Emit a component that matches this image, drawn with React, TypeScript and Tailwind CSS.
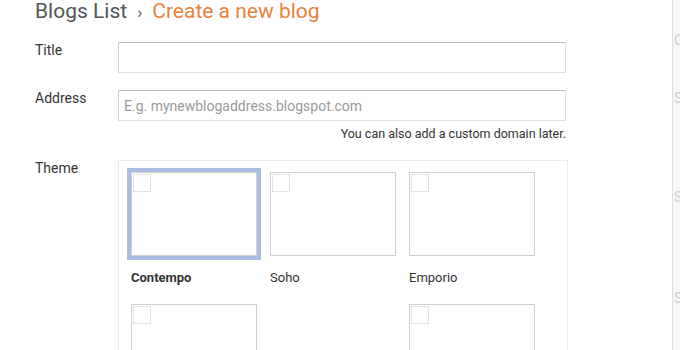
const themes = [
  { name: 'Contempo', selected: true },
  { name: 'Soho', selected: false },
  { name: 'Emporio', selected: false },
];

function ThemeTile({ name, selected, hidden }: { name?: string; selected?: boolean; hidden?: boolean }) {
  return (
    <div className="flex flex-col">
      <div className={`w-[134px] h-[92px] border-4 ${selected ? 'border-[#a9bde2]' : 'border-transparent'}`}>
        {!hidden && (
          <div className="relative w-[126px] h-[84px] border border-[#cfcfcf] bg-white">
            <div className="absolute left-px top-px w-[18px] h-[18px] border border-[#e3e3e3]" />
          </div>
        )}
      </div>
      {name && (
        <div className={`mt-[10px] pl-[4px] text-[13px] leading-[16px] text-[#333] ${selected ? 'font-bold' : ''}`}>
          {name}
        </div>
      )}
    </div>
  );
}

export default function App() {
  return (
    <div className="flex w-[680px] h-[350px] overflow-hidden bg-white font-['Roboto',sans-serif]">
      <div className="w-[672px] shrink-0 pl-[35px]">
        <h1 className="flex items-baseline text-[21px] leading-[22px] text-[#555]">
          <span>Blogs List</span>
          <span className="mx-[10px] text-[17px]">›</span>
          <span className="text-[#e9823b]">Create a new blog</span>
        </h1>

        <div className="mt-[19px] flex">
          <label className="w-[83px] text-[14px] leading-[16px] text-[#333]">Title</label>
          <input
            className="w-[448px] h-[31px] border border-[#e0e0e0] border-t-[#bdbdbd] border-l-[#cfcfcf] px-[5px] text-[14px] outline-none"
          />
        </div>

        <div className="mt-[17px] flex">
          <label className="w-[83px] text-[14px] leading-[16px] text-[#333]">Address</label>
          <div className="flex flex-col items-end">
            <input
              placeholder="E.g. mynewblogaddress.blogspot.com"
              className="w-[448px] h-[31px] border border-[#e0e0e0] border-t-[#bdbdbd] border-l-[#cfcfcf] px-[5px] text-[14px] text-[#333] placeholder:text-[#9a9a9a] outline-none"
            />
            <div className="mt-[5px] text-[12.5px] leading-[15px] text-[#333]">You can also add a custom domain later.</div>
          </div>
        </div>

        <div className="mt-[19px] flex">
          <label className="w-[83px] text-[14px] leading-[16px] text-[#333]">Theme</label>
          <div className="w-[450px] h-[200px] border border-[#ebebeb] pl-[8px] pt-[7px]">
            <div className="grid grid-cols-[139px_139px_139px] gap-y-[14px]">
              {themes.map((t) => (
                <ThemeTile key={t.name} name={t.name} selected={t.selected} />
              ))}
              <ThemeTile />
              <ThemeTile hidden />
              <ThemeTile />
            </div>
          </div>
        </div>
      </div>

      <div className="flex-1 border-l border-[#dedede] bg-[#f7f7f7] overflow-hidden text-[14px] text-[#cfcfcf] pl-[1px]">
        <div className="mt-[30px]">C</div>
        <div className="mt-[37px]">S</div>
        <div className="mt-[78px]">S</div>
        <div className="mt-[80px]">S</div>
      </div>
    </div>
  );
}
